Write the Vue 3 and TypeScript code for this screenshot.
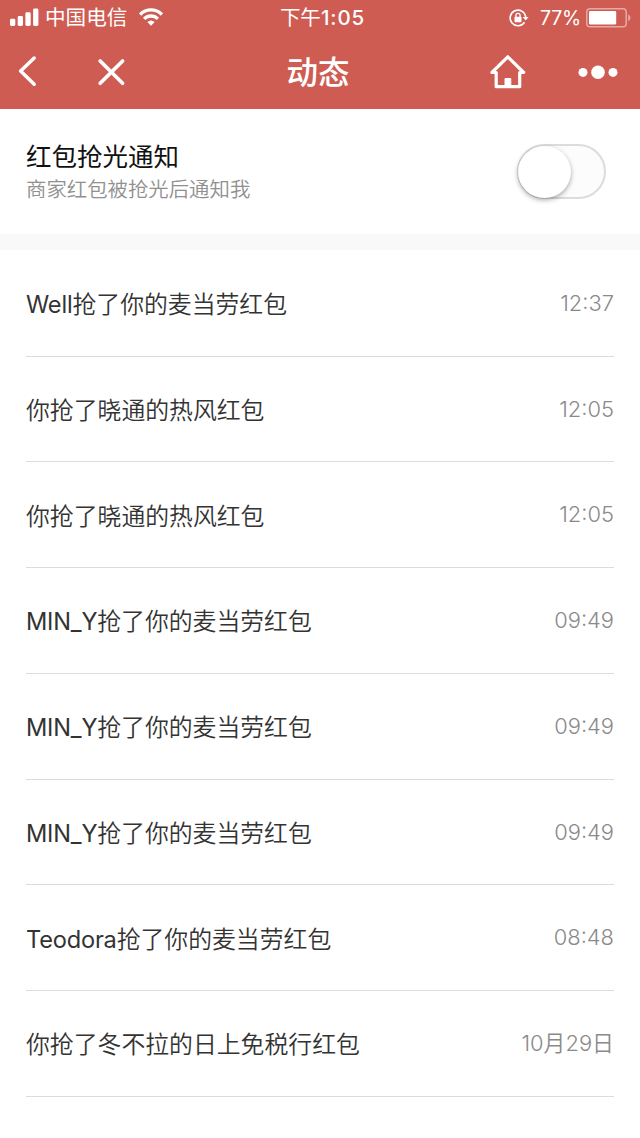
<script setup lang="ts">
interface Activity {
  name: string
  action: string
  time: string
}

const activities: Activity[] = [
  { name: 'Well', action: '抢了你的麦当劳红包', time: '12:37' },
  { name: '', action: '你抢了晓通的热风红包', time: '12:05' },
  { name: '', action: '你抢了晓通的热风红包', time: '12:05' },
  { name: 'MIN_Y', action: '抢了你的麦当劳红包', time: '09:49' },
  { name: 'MIN_Y', action: '抢了你的麦当劳红包', time: '09:49' },
  { name: 'MIN_Y', action: '抢了你的麦当劳红包', time: '09:49' },
  { name: 'Teodora', action: '抢了你的麦当劳红包', time: '08:48' },
  { name: '', action: '你抢了冬不拉的日上免税行红包', time: '10月29日' },
]
</script>

<template>
  <div class="page">
    <header class="header">
      <div class="status">
        <div class="side">
          <svg class="signal" width="30" height="20" viewBox="0 0 30 20" fill="#fff">
            <rect x="0" y="10.7" width="5.3" height="7.3" rx="1.4" />
            <rect x="7.7" y="8" width="5.3" height="10" rx="1.4" />
            <rect x="15.4" y="4.3" width="5.3" height="13.7" rx="1.4" />
            <rect x="23.1" y="0.5" width="5.3" height="17.5" rx="1.4" />
          </svg>
          <span class="carrier">中国电信</span>
          <svg class="wifi" width="24" height="18" viewBox="0 0 24 18" fill="none" stroke="#fff" stroke-width="3.3">
            <path d="M1.1 6.6C7.2.4 16.8.4 22.9 6.6" />
            <path d="M5.1 10.9C9.1 7 14.9 7 18.9 10.9" />
            <path d="M8.3 14Q12 10.9 15.7 14L12 17.7Z" fill="#fff" stroke="none" />
          </svg>
        </div>
        <div class="clock">下午<span class="digits">1:05</span></div>
        <div class="side right">
          <svg class="lock" width="20" height="18" viewBox="0 0 20 18" fill="none" stroke="#fff" stroke-width="1.6">
            <path d="M15.5 13.2A7.8 7.8 0 1 1 16.7 8" />
            <path d="M13.7 7.9h5.9l-2.9 3.7z" fill="#fff" stroke="none" />
            <rect x="5.5" y="7.8" width="7" height="5.4" rx=".6" fill="#fff" stroke="none" />
            <path d="M6.9 8V6.4a2.1 2.1 0 0 1 4.2 0V8" stroke-width="1.3" />
          </svg>
          <span class="percent">77%</span>
          <svg class="battery" width="46" height="20" viewBox="0 0 46 20">
            <rect x=".8" y=".8" width="39.4" height="18" rx="3.3" fill="none" stroke="#fff" stroke-opacity=".48" stroke-width="1.5" />
            <rect x="3" y="3" width="27.2" height="13.5" rx="1.2" fill="#fff" />
            <path d="M42.2 6.5c3 1.2 3 5.5 0 6.7z" fill="#fff" fill-opacity=".48" />
          </svg>
        </div>
      </div>
      <nav class="nav">
        <svg width="40" height="40" viewBox="0 0 40 40" fill="none" stroke="#fff" stroke-width="3.5" stroke-linecap="round" stroke-linejoin="round">
          <path d="M34.2 6L20.6 19L34.2 32.2" />
        </svg>
        <svg class="close" width="40" height="40" viewBox="0 0 40 40" fill="none" stroke="#fff" stroke-width="3.7" stroke-linecap="round">
          <path d="M9.2 9L31.6 31.2M31.6 9L9.2 31.2" />
        </svg>
        <h1 class="title">动态</h1>
        <svg class="home" width="40" height="40" viewBox="0 0 40 40" fill="none" stroke="#fff" stroke-width="3.2" stroke-linejoin="round" stroke-linecap="round">
          <path d="M8.2 20.5H3.9L19.8 4.8L35.7 20.5H31.7V34.7H8.2Z" />
          <path d="M17 34.5V26.5H22.8V34.5Z" fill="#fff" stroke-width="1" />
        </svg>
        <svg class="more" width="40" height="16" viewBox="0 0 40 16" fill="#fff">
          <circle cx="5" cy="8.4" r="4.5" />
          <circle cx="20" cy="8.2" r="6.8" />
          <circle cx="35" cy="8.4" r="4.5" />
        </svg>
      </nav>
    </header>

    <section class="setting">
      <div>
        <h2 class="setting-title">红包抢光通知</h2>
        <p class="setting-desc">商家红包被抢光后通知我</p>
      </div>
      <div class="switch" role="switch" aria-checked="false"><i class="knob"></i></div>
    </section>

    <ul class="list">
      <li v-for="(item, i) in activities" :key="i" class="row">
        <span class="message"><span class="name">{{ item.name }}</span>{{ item.action }}</span>
        <time class="time">{{ item.time }}</time>
      </li>
    </ul>
  </div>
</template>

<style>
body {
  margin: 0;
  background: #fff;
}
</style>

<style scoped>
.page {
  width: 640px;
  height: 1138px;
  overflow: hidden;
  background: #fff;
  font-family: Inter, "Noto Sans CJK SC", sans-serif;
}
.header {
  height: 109px;
  background: #cf5c53;
  color: #fff;
}
.status {
  display: grid;
  grid-template-columns: 1fr auto 1fr;
  align-items: center;
  height: 36px;
  padding: 0 8px 0 10px;
  line-height: 36px;
}
.side {
  display: flex;
  align-items: center;
}
.right {
  justify-content: flex-end;
}
.signal {
  margin-top: -1px;
}
.carrier {
  margin-left: 5px;
  font-size: 20.6px;
}
.wifi {
  margin: -2px 0 0 12px;
}
.clock {
  padding-left: 3px;
  font-size: 20.5px;
  font-weight: 400;
}
.digits {
  font-size: 20.5px;
  font-weight: 500;
  letter-spacing: 0.9px;
}
.percent {
  width: 40px;
  margin: 0 6px 0 11px;
  font-size: 19.5px;
  letter-spacing: -0.2px;
  white-space: nowrap;
}
.battery {
  margin-top: -1px;
}
.nav {
  display: flex;
  align-items: center;
  height: 72px;
}
.close {
  margin-left: 51px;
}
.title {
  width: 64px;
  margin: 2px 0 0 155.5px;
  font-size: 31.5px;
  font-weight: 500;
  line-height: 72px;
  white-space: nowrap;
}
.home {
  margin-left: 137.5px;
}
.more {
  margin-left: 50px;
}
.setting {
  display: flex;
  justify-content: space-between;
  align-items: flex-start;
  height: 125px;
  box-sizing: border-box;
  padding: 29px 34px 0 26px;
}
.setting-title {
  margin: 0;
  font-size: 25.5px;
  font-weight: 400;
  line-height: 38px;
  color: #111;
}
.setting-desc {
  margin: 0;
  font-size: 20.4px;
  font-weight: 350;
  line-height: 28px;
  color: #909090;
}
.switch {
  width: 89px;
  height: 55px;
  margin-top: 6px;
  box-sizing: border-box;
  border: 2px solid #dcdcdc;
  border-radius: 28px;
  background: #fcfcfc;
}
.knob {
  display: block;
  width: 53px;
  height: 52px;
  margin: 0 0 0 -1px;
  border-radius: 50%;
  background: #fff;
  box-shadow: 0 2px 5px rgba(0, 0, 0, 0.34);
}
.list {
  margin: 0;
  padding: 0.9px 26px 0;
  list-style: none;
  border-top: 16px solid #f9f9f9;
}
.row {
  display: flex;
  justify-content: space-between;
  align-items: center;
  height: 105.75px;
  box-sizing: border-box;
  border-bottom: 1px solid #dcdcdc;
  line-height: 36px;
}
.message {
  padding-top: 3.6px;
  font-size: 23.85px;
  font-weight: 350;
  color: #333;
}
.name {
  font-size: 23.6px;
  font-weight: 370;
  letter-spacing: -0.2px;
}
.time {
  padding-bottom: 0.8px;
  font-size: 21.9px;
  font-weight: 350;
  color: #8a8a8a;
}
</style>
